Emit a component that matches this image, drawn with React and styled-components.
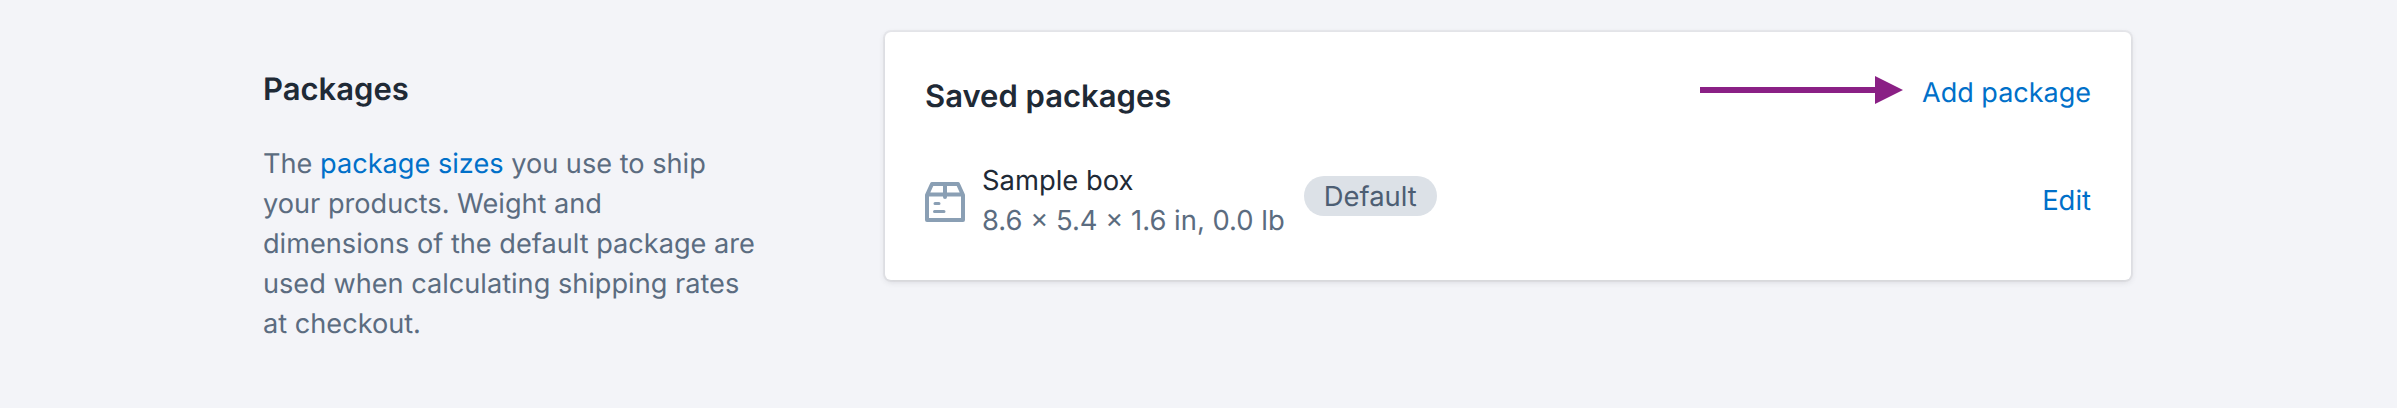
import React from 'react';
import styled, { createGlobalStyle } from 'styled-components';

const GlobalStyle = createGlobalStyle`
  html, body {
    margin: 0;
    padding: 0;
    background: #f3f4f8;
  }
  body {
    font-family: Inter, "Liberation Sans", sans-serif;
    -webkit-font-smoothing: antialiased;
    text-rendering: geometricPrecision;
  }
`;

const Page = styled.div`
  width: 2397px;
  height: 408px;
  box-sizing: border-box;
  padding: 32px 0 0 263px;
  display: grid;
  grid-template-columns: 498px 1246px;
  column-gap: 124px;
  align-items: start;
  background: #f3f4f8;
  overflow: hidden;
`;

const Intro = styled.section`
  padding-top: 38px;
`;

const Heading = styled.h2`
  margin: 0 0 34px;
  font-size: 31px;
  line-height: 40px;
  font-weight: 600;
  color: #1f2a36;
`;

const Body = styled.p`
  margin: 0;
  font-size: 27.15px;
  line-height: 40px;
  white-space: nowrap;
  color: #5b6c80;
`;

const Link = styled.a`
  color: #0070c9;
  text-decoration: none;
`;

const Card = styled.section`
  position: relative;
  height: 248px;
  box-sizing: border-box;
  padding: 40px 40px 0;
  background: #fff;
  border-radius: 6px;
  box-shadow: 0 0 0 2px rgba(63, 63, 68, 0.05), 0 2px 6px 0 rgba(63, 63, 68, 0.15);
`;

const CardHeader = styled.div`
  display: flex;
  align-items: flex-start;
  justify-content: space-between;
  height: 48px;
`;

const CardTitle = styled.h3`
  margin: 0;
  font-size: 31px;
  line-height: 50px;
  font-weight: 600;
  color: #1f2a36;
`;

const ActionLink = styled(Link)`
  font-size: 27px;
  line-height: 42px;
`;

const Arrow = styled.svg`
  position: absolute;
  left: 815px;
  top: 44px;
`;

const Row = styled.div`
  display: flex;
  align-items: center;
  margin-top: 40px;
`;

const BoxIcon = styled.svg`
  flex: none;
  align-self: flex-start;
  margin: 22px 17px 0 0;
`;

const Details = styled.div`
  display: flex;
  flex-direction: column;
`;

const Name = styled.span`
  font-size: 27.4px;
  line-height: 40px;
  color: #1f2a36;
`;

const Meta = styled.span`
  font-size: 27.4px;
  line-height: 40px;
  color: #5b6c80;
`;

const Badge = styled.span`
  align-self: flex-start;
  margin: 16px 0 0 19px;
  padding: 0 20px;
  height: 40px;
  line-height: 40px;
  border-radius: 20px;
  background: #dce1e7;
  font-size: 27.4px;
  color: #4d5e73;
`;

const RowAction = styled(ActionLink)`
  margin-left: auto;
  font-size: 27.4px;
  line-height: 40px;
`;

const App = () => {
  return (
    <>
      <GlobalStyle />
      <Page>
        <Intro>
          <Heading>Packages</Heading>
          <Body>
            The <Link href="#">package sizes</Link> you use to ship<br />
            your products. Weight and<br />
            dimensions of the default package are<br />
            used when calculating shipping rates<br />
            at checkout.
          </Body>
        </Intro>
        <Card>
          <CardHeader>
            <CardTitle>Saved packages</CardTitle>
            <ActionLink href="#">Add package</ActionLink>
          </CardHeader>
          <Arrow width="204" height="28" viewBox="0 0 204 28">
            <path d="M0 11h175V0l28 14-28 14V17H0z" fill="#8a2085" />
          </Arrow>
          <Row>
            <BoxIcon width="40" height="40" viewBox="0 0 40 40" fill="none">
              <path
                d="M2 13 7 2h26l5 11v25H2zM2 12.5h36"
                stroke="#8a9fb4"
                strokeWidth="4"
                strokeLinejoin="round"
              />
              <path d="M20 2v13" stroke="#8a9fb4" strokeWidth="4" strokeLinecap="round" />
              <path d="M10 21.5h4M9.5 29.5h9.5" stroke="#8a9fb4" strokeWidth="3" strokeLinecap="round" />
            </BoxIcon>
            <Details>
              <Name>Sample box</Name>
              <Meta>8.6 × 5.4 × 1.6 in, 0.0 lb</Meta>
            </Details>
            <Badge>Default</Badge>
            <RowAction href="#">Edit</RowAction>
          </Row>
        </Card>
      </Page>
    </>
  );
};

export default App;
